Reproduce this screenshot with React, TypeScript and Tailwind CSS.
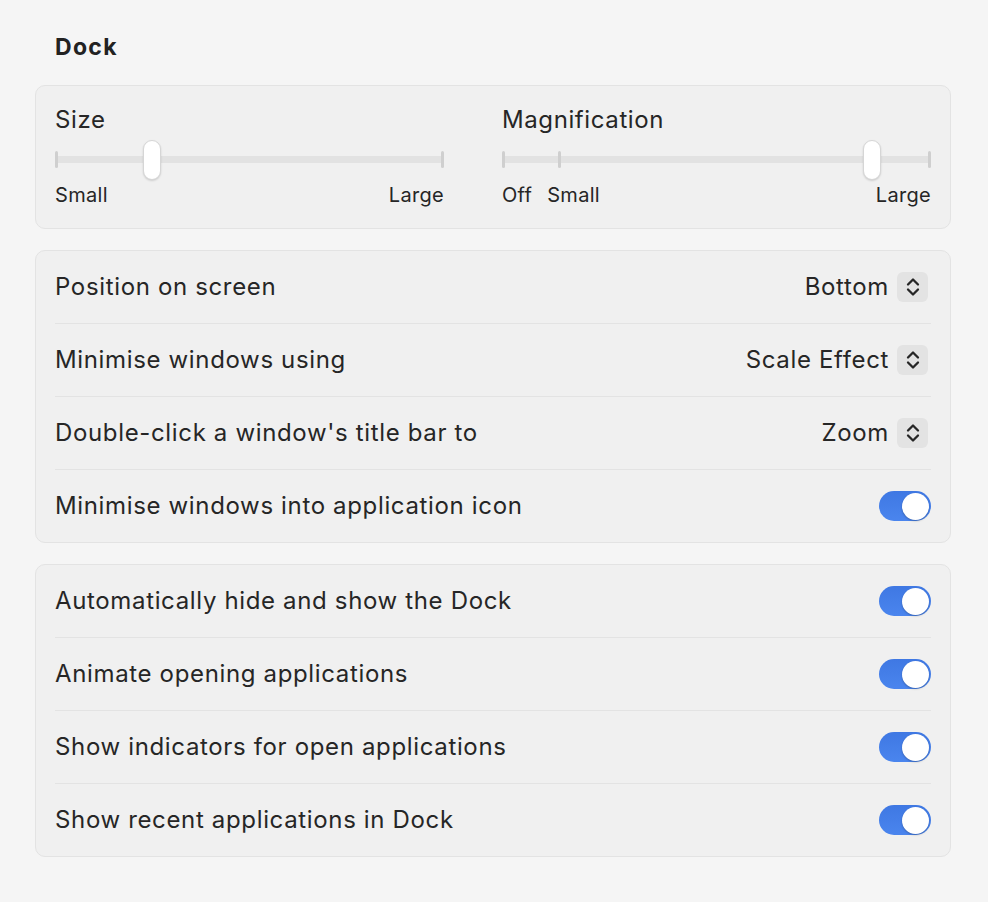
import React from "react";

function UpDown() {
  return (
    <span className="flex h-[30px] w-[31px] items-center justify-center rounded-[6px] bg-[#e3e3e3]">
      <svg width="16" height="24" viewBox="0 0 16 24" fill="none">
        <path d="M3 9.5 L8 4.5 L13 9.5" stroke="#262626" strokeWidth="2.3" strokeLinecap="round" strokeLinejoin="round" />
        <path d="M3 14.5 L8 19.5 L13 14.5" stroke="#262626" strokeWidth="2.3" strokeLinecap="round" strokeLinejoin="round" />
      </svg>
    </span>
  );
}

function Toggle() {
  return (
    <span className="flex h-[30px] w-[52px] items-center justify-end rounded-full bg-gradient-to-b from-[#3f78e3] to-[#4a85ee] px-[2px]">
      <span className="h-[27px] w-[27px] rounded-full bg-white shadow-[0_1px_2px_rgba(0,0,0,0.25)]" />
    </span>
  );
}

function Track({ ticks, thumb }: { ticks: number[]; thumb: number }) {
  // ticks and thumb are px offsets from the left of the track
  return (
    <div className="relative h-[40px]">
      <div className="absolute left-0 right-0 top-[16px] h-[7px] rounded-full bg-[#e2e2e2]" />
      {ticks.map((t) => (
        <span
          key={t}
          className="absolute top-[11px] h-[17px] w-[3px] rounded-full bg-[#cfcfcf]"
          style={{ left: t }}
        />
      ))}
      <span
        className="absolute top-0 h-[40px] w-[18px] rounded-full border border-[#d6d6d6] bg-white shadow-[0_1px_2px_rgba(0,0,0,0.15)]"
        style={{ left: thumb }}
      />
    </div>
  );
}

function Row({ label, children, last }: { label: string; children: React.ReactNode; last?: boolean }) {
  return (
    <div className={`flex items-center justify-between ${last ? "h-[72px]" : "h-[73px] border-b border-[#e3e3e3]"}`}>
      <span className="text-[24px] tracking-[0.65px] text-[#262626]">{label}</span>
      {children}
    </div>
  );
}

function Popup({ value }: { value: string }) {
  return (
    <div className="mr-[3px] flex items-center gap-[8px]">
      <span className="text-[24px] tracking-[0.65px] text-[#262626]">{value}</span>
      <UpDown />
    </div>
  );
}

export default function App() {
  return (
    <div
      className="min-h-[902px] bg-[#f5f5f5] pl-[35px] pr-[37px] pt-[32px] text-[#262626]"
      style={{ fontFamily: "Inter, 'Noto Sans', 'Liberation Sans', sans-serif" }}
    >
      <h1 className="pl-[20px] text-[23px] font-bold leading-[30px] tracking-[1.3px] text-[#222]">Dock</h1>

      <div className="mt-[23px] flex gap-[58px] rounded-[10px] border border-[#e3e3e3] bg-[#f0f0f0] px-[19px] pb-[21px] pt-[20px]">
        <div className="w-[389px]">
          <div className="h-[28px] text-[24px] leading-[28px] tracking-[0.6px]">Size</div>
          <div className="mt-[6px]">
            <Track ticks={[0, 386]} thumb={88} />
          </div>
          <div className="mt-[3px] flex justify-between text-[20px] leading-[24px] tracking-[0.3px]">
            <span>Small</span>
            <span>Large</span>
          </div>
        </div>
        <div className="flex-1">
          <div className="h-[28px] text-[24px] leading-[28px] tracking-[0.6px]">Magnification</div>
          <div className="mt-[6px]">
            <Track ticks={[0, 56, 426]} thumb={361} />
          </div>
          <div className="mt-[3px] flex text-[20px] leading-[24px] tracking-[0.3px]">
            <span>Off</span>
            <span className="ml-[15px]">Small</span>
            <span className="ml-auto">Large</span>
          </div>
        </div>
      </div>

      <div className="mt-[21px] rounded-[10px] border border-[#e3e3e3] bg-[#f0f0f0] px-[19px]">
        <Row label="Position on screen">
          <Popup value="Bottom" />
        </Row>
        <Row label="Minimise windows using">
          <Popup value="Scale Effect" />
        </Row>
        <Row label="Double-click a window's title bar to">
          <Popup value="Zoom" />
        </Row>
        <Row label="Minimise windows into application icon" last>
          <Toggle />
        </Row>
      </div>

      <div className="mt-[21px] rounded-[10px] border border-[#e3e3e3] bg-[#f0f0f0] px-[19px]">
        <Row label="Automatically hide and show the Dock">
          <Toggle />
        </Row>
        <Row label="Animate opening applications">
          <Toggle />
        </Row>
        <Row label="Show indicators for open applications">
          <Toggle />
        </Row>
        <Row label="Show recent applications in Dock" last>
          <Toggle />
        </Row>
      </div>
    </div>
  );
}
